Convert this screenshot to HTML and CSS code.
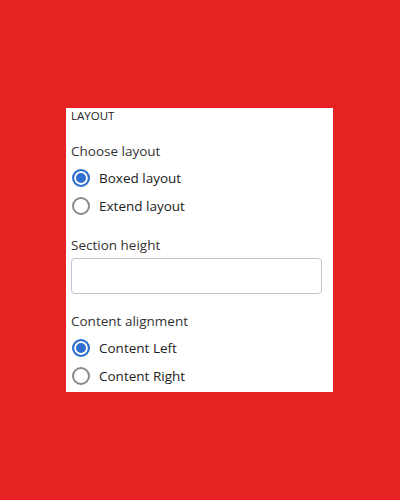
FILE: index.html
```html
<!DOCTYPE html>
<html lang="en">
<head>
  <meta charset="UTF-8">
  <meta name="viewport" content="width=device-width, initial-scale=1.0">
  <title>Layout</title>
  <link rel="stylesheet" href="styles.css">
</head>
<body>

  <div class="panel">
    <div class="panel-title">LAYOUT</div>

    <div class="field-label first">Choose layout</div>
    <div class="radio-group">
      <div class="radio-row">
        <span class="radio checked"></span>
        <span class="radio-text">Boxed layout</span>
      </div>
      <div class="radio-row">
        <span class="radio"></span>
        <span class="radio-text">Extend layout</span>
      </div>
    </div>

    <div class="field-label">Section height</div>
    <input type="text" class="text-input">

    <div class="field-label after-input">Content alignment</div>
    <div class="radio-group">
      <div class="radio-row">
        <span class="radio checked"></span>
        <span class="radio-text">Content Left</span>
      </div>
      <div class="radio-row">
        <span class="radio"></span>
        <span class="radio-text">Content Right</span>
      </div>
    </div>
  </div>

</body>
</html>
```

FILE: styles.css
```css
html, body {
  height: 100%;
}

body {
  margin: 0;
  padding: 108px 0 0 66px;
  box-sizing: border-box;
  background: #e52322;
  font-family: 'Open Sans', sans-serif;
  color: #222;
}

.panel {
  width: 267px;
  box-sizing: border-box;
  background: #fff;
  padding: 0 11px 2px 5px;
}

.panel-title {
  font-size: 11.5px;
  line-height: 16px;
  color: #222;
}

.field-label {
  font-size: 13.5px;
  line-height: 20px;
  margin-top: 15px;
  color: #333;
}

.field-label.first {
  margin-top: 17px;
}

.field-label.after-input {
  margin-top: 17px;
}

.radio-group {
  margin-top: 3px;
}

.radio-row {
  display: flex;
  align-items: center;
  height: 28px;
}

.radio {
  width: 18px;
  height: 18px;
  box-sizing: border-box;
  border: 2px solid #8a8a8a;
  border-radius: 50%;
  margin-left: 1px;
  margin-right: 9px;
  background: #fff;
}

.radio.checked {
  border-color: #2f6fcf;
  box-shadow: inset 0 0 0 2px #fff;
  background: #2f6fcf;
}

.radio-text {
  font-size: 13.5px;
  color: #222;
}

.text-input {
  display: block;
  width: 251px;
  height: 36px;
  margin-top: 3px;
  box-sizing: border-box;
  border: 1px solid #c4c4c8;
  border-radius: 4px;
  background: #fff;
  outline: none;
}
```
